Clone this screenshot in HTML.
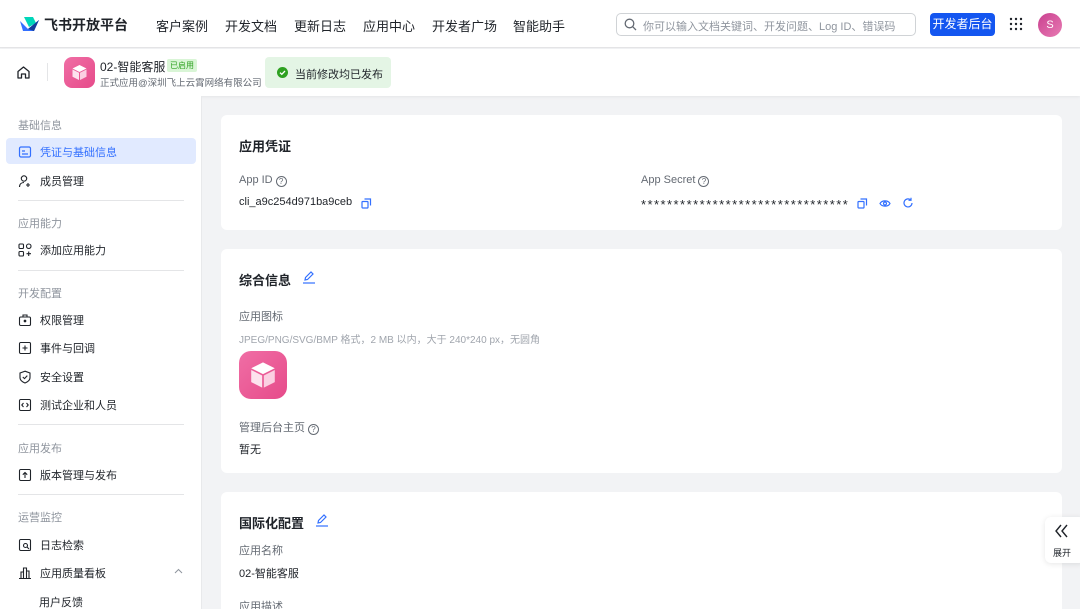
<!DOCTYPE html>
<html><head><meta charset="utf-8"><style>
*{margin:0;padding:0;box-sizing:border-box}
html,body{width:1080px;height:609px;overflow:hidden}
body{font-family:"Liberation Sans","Noto Sans CJK SC",sans-serif;background:#f2f3f5;color:#1f2329;position:relative}
.abs{position:absolute}
.top{left:0;top:0;width:1080px;height:48px;background:#fff;border-bottom:1px solid #e4e5e7}
.nav{top:16px;font-size:13px;color:#1f2329}
.sub{left:0;top:49px;width:1080px;height:47px;background:#fff;box-shadow:0 1px 3px rgba(0,0,0,.06)}
.side{left:0;top:96px;width:202px;height:513px;background:#fff;border-right:1px solid #e8e9eb}
.grp{left:18px;font-size:11px;color:#8f959e}
.item{left:18px;font-size:11px;color:#1f2329;display:flex;align-items:center;gap:8px}
.item svg{width:14px;height:14px}
.hr{left:18px;width:166px;height:1px;background:#e4e5e7}
.card{left:221px;width:841px;background:#fff;border-radius:6px}
.h{font-size:13px;font-weight:bold;color:#1f2329}
.lbl{font-size:11px;color:#646a73}
.val{font-size:11px;color:#1f2329}
.q{display:inline-block;width:11px;height:11px;border:1px solid #646a73;border-radius:50%;font-size:8px;text-align:center;line-height:9px;vertical-align:-1px;margin-left:3px}
</style></head><body>
<div class="abs top"></div>
<svg class="abs" style="left:19px;top:15px" width="22" height="18" viewBox="0 0 22 18"><path d="M1 6 L9 14 L20 5 L15 16 L4 16Z" fill="#3370ff"/><path d="M5 2 L14 2 L17 8 L10 12Z" fill="#00d6b9"/><path d="M9 14 L20 5 L15 16Z" fill="#133c9a"/></svg>
<div class="abs" style="left:44px;top:15px;font-size:14px;font-weight:bold">飞书开放平台</div>
<div class="abs nav" style="left:156px">客户案例</div>
<div class="abs nav" style="left:225px">开发文档</div>
<div class="abs nav" style="left:294px">更新日志</div>
<div class="abs nav" style="left:363px">应用中心</div>
<div class="abs nav" style="left:432px">开发者广场</div>
<div class="abs nav" style="left:513px">智能助手</div>
<div class="abs" style="left:616px;top:13px;width:300px;height:23px;border:1px solid #d0d3d6;border-radius:5px"></div>
<svg class="abs" style="left:624px;top:18px" width="13" height="13" viewBox="0 0 13 13"><circle cx="5.5" cy="5.5" r="4.3" fill="none" stroke="#646a73" stroke-width="1.3"/><path d="M8.7 8.7L12 12" stroke="#646a73" stroke-width="1.3"/></svg>
<div class="abs" style="left:643px;top:18px;font-size:11px;color:#8f959e">你可以输入文档关键词、开发问题、Log ID、错误码</div>
<div class="abs" style="left:930px;top:13px;width:65px;height:23px;background:#1456f0;border-radius:4px;color:#fff;font-size:12px;text-align:center;line-height:23px">开发者后台</div>
<svg class="abs" style="left:1009px;top:17px" width="14" height="14"><g fill="#1f2329"><circle cx="2" cy="2" r="1.2"/><circle cx="7" cy="2" r="1.2"/><circle cx="12" cy="2" r="1.2"/><circle cx="2" cy="7" r="1.2"/><circle cx="7" cy="7" r="1.2"/><circle cx="12" cy="7" r="1.2"/><circle cx="2" cy="12" r="1.2"/><circle cx="7" cy="12" r="1.2"/><circle cx="12" cy="12" r="1.2"/></g></svg>
<div class="abs" style="left:1038px;top:13px;width:24px;height:24px;border-radius:50%;background:linear-gradient(135deg,#c9408f,#e87bb3);color:#fff;font-size:11px;text-align:center;line-height:24px">S</div>

<div class="abs sub"></div>
<svg class="abs" style="left:16px;top:65px" width="15" height="15" viewBox="0 0 15 15"><path d="M2 6.5 L7.5 2 L13 6.5 V13 H9.5 V9 H5.5 V13 H2Z" fill="none" stroke="#1f2329" stroke-width="1.3" stroke-linejoin="round"/></svg>
<div class="abs" style="left:47px;top:63px;width:1px;height:18px;background:#e4e5e7"></div>
<div class="abs" style="left:64px;top:57px;width:31px;height:31px;border-radius:8px;background:linear-gradient(135deg,#f06ea5,#e64b8a)"></div>
<svg class="abs" style="left:70px;top:63px" width="19" height="19" viewBox="0 0 19 19"><path d="M9.5 2 L16.5 5.5 L9.5 9 L2.5 5.5Z" fill="#fff"/><path d="M2.5 6.5 L9 9.8 V17 L2.5 13.7Z" fill="#fde3ee"/><path d="M16.5 6.5 L10 9.8 V17 L16.5 13.7Z" fill="#fbd0e2"/></svg>
<div class="abs" style="left:100px;top:58px;font-size:12px">02-智能客服</div>
<div class="abs" style="left:167px;top:59px;font-size:8px;color:#2ea121;background:#d9f5d6;padding:1px 3px;border-radius:2px">已启用</div>
<div class="abs" style="left:100px;top:75px;font-size:9.5px;color:#646a73;white-space:nowrap">正式应用@深圳飞上云霄网络有限公司</div>
<div class="abs" style="left:265px;top:57px;width:126px;height:31px;background:#e4f5e5;border-radius:4px"></div>
<div class="abs" style="left:277px;top:67px;width:11px;height:11px;border-radius:50%;background:#2ea121"></div>
<svg class="abs" style="left:277px;top:67px" width="11" height="11"><path d="M3 5.6 L4.8 7.3 L8 4" fill="none" stroke="#fff" stroke-width="1.3"/></svg>
<div class="abs" style="left:295px;top:66px;font-size:11px">当前修改均已发布</div>

<div class="abs side"></div>
<div class="abs grp" style="top:117px">基础信息</div>
<div class="abs" style="left:6px;top:138px;width:190px;height:26px;background:#e1eaff;border-radius:4px"></div>
<div class="abs item" style="top:144px;color:#3370ff"><svg viewBox="0 0 14 14"><rect x="1.5" y="2" width="11" height="10" rx="1.5" fill="none" stroke="#3370ff" stroke-width="1.2"/><path d="M4 6h3M4 9h6" stroke="#3370ff" stroke-width="1.2"/></svg>凭证与基础信息</div>
<div class="abs item" style="top:173px"><svg viewBox="0 0 14 14"><circle cx="6" cy="4.5" r="2.7" fill="none" stroke="#1f2329" stroke-width="1.1"/><path d="M1.5 13c0-3 2-4.5 4.5-4.5M10 9v4M8 11h4" fill="none" stroke="#1f2329" stroke-width="1.1"/></svg>成员管理</div>
<div class="abs hr" style="top:200px"></div>
<div class="abs grp" style="top:215px">应用能力</div>
<div class="abs item" style="top:242px"><svg viewBox="0 0 14 14"><g fill="none" stroke="#1f2329" stroke-width="1.1"><rect x="1" y="1" width="4.5" height="4.5" rx="1"/><rect x="8.5" y="1" width="4.5" height="4.5" rx="2.2"/><rect x="1" y="8.5" width="4.5" height="4.5" rx="1"/><path d="M10.7 8.5v4.5M8.5 10.7h4.5"/></g></svg>添加应用能力</div>
<div class="abs hr" style="top:270px"></div>
<div class="abs grp" style="top:285px">开发配置</div>
<div class="abs item" style="top:312px"><svg viewBox="0 0 14 14"><g fill="none" stroke="#1f2329" stroke-width="1.1"><rect x="1.5" y="4" width="11" height="8.5" rx="1.2"/><path d="M5 4V2h4v2"/><circle cx="7" cy="8" r=".8" fill="#1f2329"/></g></svg>权限管理</div>
<div class="abs item" style="top:340px"><svg viewBox="0 0 14 14"><g fill="none" stroke="#1f2329" stroke-width="1.1"><rect x="1.5" y="1.5" width="11" height="11" rx="1.2"/><path d="M7 4.5v5M4.5 7h5"/></g></svg>事件与回调</div>
<div class="abs item" style="top:369px"><svg viewBox="0 0 14 14"><g fill="none" stroke="#1f2329" stroke-width="1.1"><path d="M7 1.2 L12 3 V7.5 C12 10 9.5 12 7 13 C4.5 12 2 10 2 7.5 V3Z"/><path d="M4.8 7 L6.5 8.6 L9.3 5.6"/></g></svg>安全设置</div>
<div class="abs item" style="top:397px"><svg viewBox="0 0 14 14"><g fill="none" stroke="#1f2329" stroke-width="1.1"><rect x="1.5" y="1.5" width="11" height="11" rx="1.2"/><path d="M5.5 5L3.8 7l1.7 2M8.5 5l1.7 2-1.7 2"/></g></svg>测试企业和人员</div>
<div class="abs hr" style="top:424px"></div>
<div class="abs grp" style="top:440px">应用发布</div>
<div class="abs item" style="top:467px"><svg viewBox="0 0 14 14"><g fill="none" stroke="#1f2329" stroke-width="1.1"><rect x="1.5" y="1.5" width="11" height="11" rx="1.2"/><path d="M7 10V4.5M4.8 6.7L7 4.5l2.2 2.2"/></g></svg>版本管理与发布</div>
<div class="abs hr" style="top:494px"></div>
<div class="abs grp" style="top:509px">运营监控</div>
<div class="abs item" style="top:537px"><svg viewBox="0 0 14 14"><g fill="none" stroke="#1f2329" stroke-width="1.1"><rect x="1.5" y="1.5" width="11" height="11" rx="1.2"/><circle cx="7.5" cy="7.5" r="2"/><path d="M9 9l2 2"/></g></svg>日志检索</div>
<div class="abs item" style="top:565px"><svg viewBox="0 0 14 14"><g fill="none" stroke="#1f2329" stroke-width="1.1"><path d="M1 12.5h12M3 12.5V6h2.5v6.5M5.5 12.5V2h3v10.5M8.5 12.5V5h2.5v7.5"/></g></svg>应用质量看板</div>
<svg class="abs" style="left:174px;top:568px" width="9" height="6"><path d="M1 5 L4.5 1.5 L8 5" fill="none" stroke="#8f959e" stroke-width="1"/></svg>
<div class="abs" style="left:39px;top:594px;font-size:11px">用户反馈</div>

<div class="abs card" style="top:115px;height:115px"></div>
<div class="abs h" style="left:239px;top:136px">应用凭证</div>
<div class="abs lbl" style="left:239px;top:174px">App ID<span class="q">?</span></div>
<div class="abs val" style="left:239px;top:196px">cli_a9c254d971ba9ceb</div>
<svg class="abs" style="left:361px;top:198px" width="11" height="11" viewBox="0 0 11 11"><g fill="none" stroke="#3370ff" stroke-width="1.2"><rect x="1" y="3.5" width="6" height="6.5" rx=".8"/><path d="M3.5 1h6v6.5"/></g></svg>
<div class="abs lbl" style="left:641px;top:174px">App Secret<span class="q">?</span></div>
<div class="abs" style="left:641px;top:197px;letter-spacing:1.45px;font-size:13px;color:#1f2329;white-space:nowrap">********************************</div>
<svg class="abs" style="left:857px;top:198px" width="11" height="11" viewBox="0 0 11 11"><g fill="none" stroke="#3370ff" stroke-width="1.2"><rect x="1" y="3.5" width="6" height="6.5" rx=".8"/><path d="M3.5 1h6v6.5"/></g></svg>
<svg class="abs" style="left:879px;top:198px" width="12" height="11" viewBox="0 0 12 11"><g fill="none" stroke="#3370ff" stroke-width="1.2"><path d="M1 5.5C3 2 9 2 11 5.5C9 9 3 9 1 5.5Z"/><circle cx="6" cy="5.5" r="1.5"/></g></svg>
<svg class="abs" style="left:902px;top:197px" width="12" height="12" viewBox="0 0 12 12"><g fill="none" stroke="#3370ff" stroke-width="1.2"><path d="M10 6A4 4 0 1 1 8.5 2.8"/><path d="M9 0.8V3.3H6.5"/></g></svg>

<div class="abs card" style="top:249px;height:224px"></div>
<div class="abs h" style="left:239px;top:270px">综合信息</div>
<svg class="abs" style="left:302px;top:270px" width="14" height="14" viewBox="0 0 14 14"><g fill="none" stroke="#3370ff" stroke-width="1.2"><path d="M3 10 L3.5 7.5 L9 2 L11 4 L5.5 9.5Z"/><path d="M1 13h12"/></g></svg>
<div class="abs lbl" style="left:239px;top:308px">应用图标</div>
<div class="abs" style="left:239px;top:331px;font-size:10px;color:#a0a5ad">JPEG/PNG/SVG/BMP 格式，2 MB 以内，大于 240*240 px，无圆角</div>
<div class="abs" style="left:239px;top:351px;width:48px;height:48px;border-radius:12px;background:linear-gradient(135deg,#f06ea5,#e64b8a)"></div>
<svg class="abs" style="left:247px;top:359px" width="32" height="32" viewBox="0 0 19 19"><path d="M9.5 2 L16.5 5.5 L9.5 9 L2.5 5.5Z" fill="#fff"/><path d="M2.5 6.5 L9 9.8 V17 L2.5 13.7Z" fill="#fde3ee"/><path d="M16.5 6.5 L10 9.8 V17 L16.5 13.7Z" fill="#fbd0e2"/></svg>
<div class="abs lbl" style="left:239px;top:419px">管理后台主页<span class="q">?</span></div>
<div class="abs val" style="left:239px;top:441px">暂无</div>

<div class="abs card" style="top:492px;height:130px"></div>
<div class="abs h" style="left:239px;top:513px">国际化配置</div>
<svg class="abs" style="left:315px;top:513px" width="14" height="14" viewBox="0 0 14 14"><g fill="none" stroke="#3370ff" stroke-width="1.2"><path d="M3 10 L3.5 7.5 L9 2 L11 4 L5.5 9.5Z"/><path d="M1 13h12"/></g></svg>
<div class="abs lbl" style="left:239px;top:542px">应用名称</div>
<div class="abs val" style="left:239px;top:565px">02-智能客服</div>
<div class="abs lbl" style="left:239px;top:598px">应用描述</div>

<div class="abs" style="left:1045px;top:517px;width:40px;height:46px;background:#fff;border-radius:6px;box-shadow:0 1px 6px rgba(0,0,0,.1)"></div>
<svg class="abs" style="left:1054px;top:524px" width="16" height="14" viewBox="0 0 16 14"><g fill="none" stroke="#1f2329" stroke-width="1.4"><path d="M7 1L2 7l5 6M13 1L8 7l5 6"/></g></svg>
<div class="abs" style="left:1053px;top:546px;font-size:9px">展开</div>
</body></html>
